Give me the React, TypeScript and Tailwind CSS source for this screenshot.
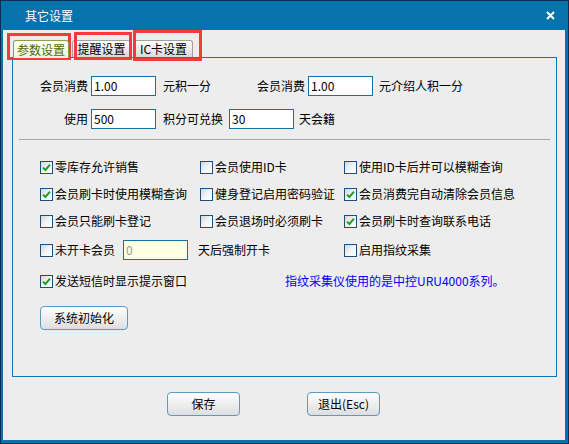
import React from 'react';

const Check = ({ checked }: { checked?: boolean }) => (
  <span className="w-[13px] h-[13px] shrink-0 border border-[#1d4f7c] bg-gradient-to-br from-[#d4d4d4] via-[#f4f4f4] to-white flex items-center justify-center">
    {checked && (
      <svg width="9" height="9" viewBox="0 0 9 9">
        <path d="M1 4.6 L3.4 7 L8 1.6" stroke="#1f9e1f" strokeWidth="2" fill="none" />
      </svg>
    )}
  </span>
);

const Item = ({ label, checked }: { label: string; checked?: boolean }) => (
  <div className="flex items-center gap-[2px] h-[14px] whitespace-nowrap">
    <Check checked={checked} />
    <span>{label}</span>
  </div>
);

const Field = ({ value, yellow }: { value: string; yellow?: boolean }) => (
  <div
    className={`w-[65px] h-[20px] border border-[#1a6fa6] flex items-center pl-[2px] ${
      yellow ? 'bg-[#ffffe1] text-[#9a9a9a]' : 'bg-white text-black'
    }`}
  >
    {value}
  </div>
);

const Btn = ({ label, w }: { label: string; w: string }) => (
  <button
    className={`${w} h-[24px] rounded-[4px] border border-[#5a9ac4] bg-gradient-to-b from-white to-[#dedede] flex items-center justify-center text-black`}
  >
    {label}
  </button>
);

const App = () => {
  const tabs = [
    { label: '参数设置', active: true, w: 'w-[56px]' },
    { label: '提醒设置', w: 'w-[59px]' },
    { label: 'IC卡设置', w: 'w-[59px]' },
  ];

  return (
    <div className="w-[569px] h-[444px] bg-[#0673aa] border border-[#0b2e52] flex flex-col font-['Noto_Sans_CJK_SC',sans-serif] text-[12px] leading-[14px] text-black">
      {/* title bar */}
      <div className="h-[29px] shrink-0 flex items-center justify-between pl-[24px] pr-[13px] text-white">
        <span>其它设置</span>
        <svg width="9" height="9" viewBox="0 0 9 9">
          <path d="M1 1 L8 8 M8 1 L1 8" stroke="white" strokeWidth="2" />
        </svg>
      </div>

      <div className="flex-1 ml-[2px] mr-[3px] mb-[3px] bg-[#ededed] flex flex-col relative">
        {/* tabs */}
        <div className="flex items-end gap-[3px] pl-[10px] pt-[10px] h-[27px]">
          {tabs.map((t) =>
            t.active ? (
              <div
                key={t.label}
                className={`${t.w} h-[18px] -mb-px relative z-10 rounded-t-[3px] border border-b-0 border-[#8aa044] bg-gradient-to-b from-white to-[#eef2e2] text-[#4e6b00] flex items-center justify-center`}
              >
                {t.label}
              </div>
            ) : (
              <div
                key={t.label}
                className={`${t.w} h-[17px] rounded-t-[3px] border border-b-0 border-[#a2a2a2] bg-gradient-to-b from-white to-[#d9d9d9] flex items-center justify-center`}
              >
                {t.label}
              </div>
            )
          )}
        </div>

        {/* panel */}
        <div className="ml-[9px] mr-[8px] h-[320px] border border-[#0b78b4] flex flex-col">
          <div className="flex items-center mt-[18px]">
            <span className="w-[75px] text-right mr-[3px]">会员消费</span>
            <Field value="1.00" />
            <span className="ml-[7px] w-[48px]">元积一分</span>
            <span className="ml-[46px] mr-[3px]">会员消费</span>
            <Field value="1.00" />
            <span className="ml-[6px]">元介绍人积一分</span>
          </div>
          <div className="flex items-center mt-[13px]">
            <span className="w-[75px] text-right mr-[3px]">使用</span>
            <Field value="500" />
            <span className="ml-[7px]">积分可兑换</span>
            <span className="ml-[6px]">
              <Field value="30" />
            </span>
            <span className="ml-[5px]">天会籍</span>
          </div>

          <div className="mt-[10px] mx-[6px] h-px bg-[#a6a6a6]" />

          <div className="mt-[20px] pl-[27px] grid grid-cols-[160px_144px_1fr] gap-y-[13px]">
            <Item label="零库存允许销售" checked />
            <Item label="会员使用ID卡" />
            <Item label="使用ID卡后并可以模糊查询" />
            <Item label="会员刷卡时使用模糊查询" checked />
            <Item label="健身登记启用密码验证" />
            <Item label="会员消费完自动清除会员信息" checked />
            <Item label="会员只能刷卡登记" />
            <Item label="会员退场时必须刷卡" />
            <Item label="会员刷卡时查询联系电话" checked />
          </div>

          <div className="mt-[12px] pl-[27px] flex items-center h-[20px]">
            <div className="w-[304px] flex items-center">
              <Item label="未开卡会员" />
              <span className="ml-[8px]">
                <Field value="0" yellow />
              </span>
              <span className="ml-[10px]">天后强制开卡</span>
            </div>
            <Item label="启用指纹采集" />
          </div>

          <div className="mt-[14px] pl-[27px] flex items-center h-[14px]">
            <div className="w-[245px]">
              <Item label="发送短信时显示提示窗口" checked />
            </div>
            <span className="text-[#0000ff]">指纹采集仪使用的是中控URU4000系列。</span>
          </div>

          <div className="mt-[18px] pl-[27px]">
            <Btn label="系统初始化" w="w-[88px]" />
          </div>
        </div>

        {/* bottom buttons */}
        <div className="flex pt-[15px] pl-[164px] gap-[67px]">
          <Btn label="保存" w="w-[73px]" />
          <Btn label="退出(Esc)" w="w-[73px]" />
        </div>

        {/* red annotation boxes */}
        <div className="absolute left-[4px] top-[3px] w-[64px] h-[27px] border-[3px] border-[#f53a3a] pointer-events-none" />
        <div className="absolute left-[71px] top-[2px] w-[58px] h-[28px] border-[3px] border-[#f53a3a] pointer-events-none" />
        <div className="absolute left-[130px] top-0 w-[69px] h-[31px] border-[3px] border-[#f53a3a] pointer-events-none" />
      </div>
    </div>
  );
};

export default App;
